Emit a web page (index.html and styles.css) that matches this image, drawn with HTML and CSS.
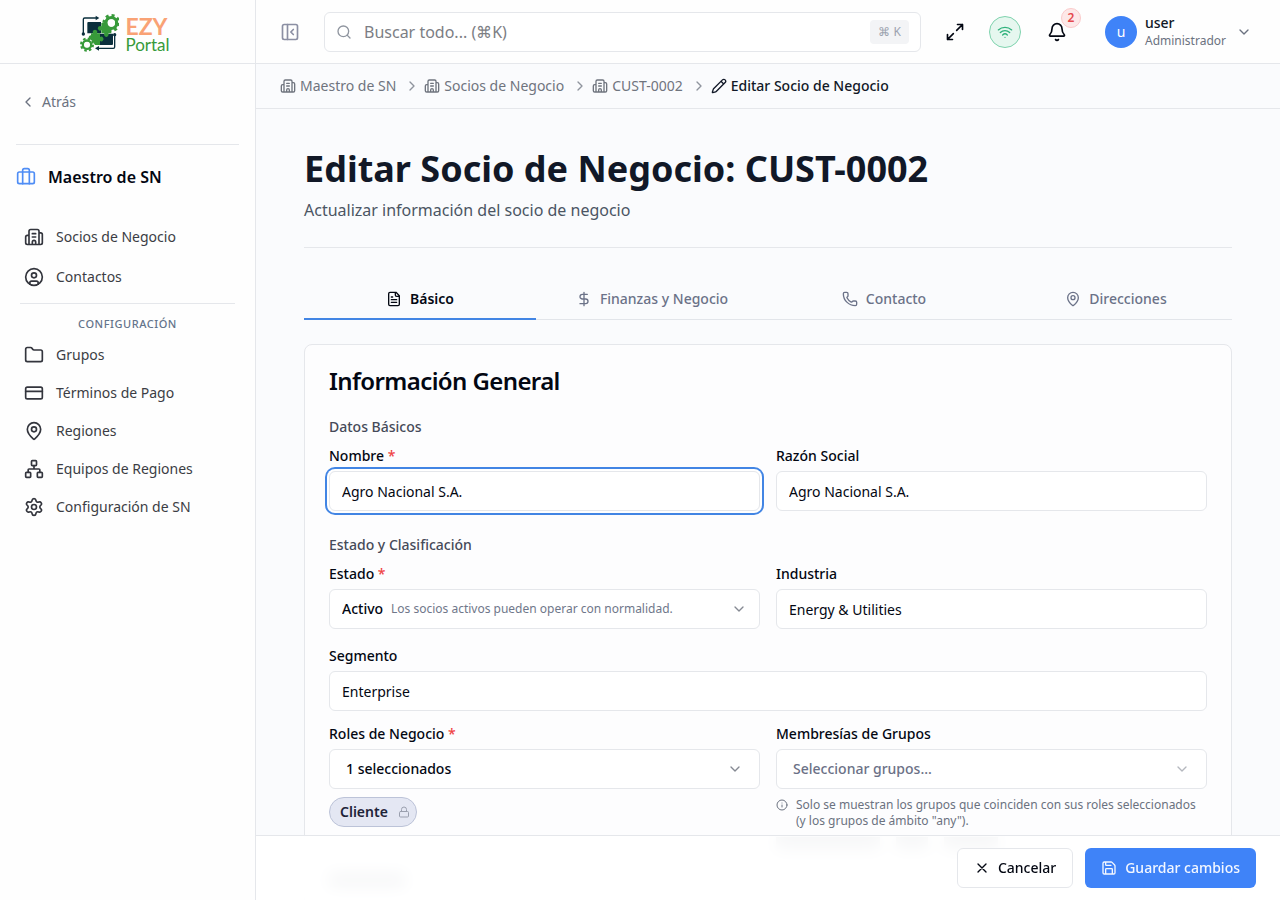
FILE: index.html
```html
<!DOCTYPE html>
<html lang="es">
<head>
<meta charset="utf-8">
<meta name="viewport" content="width=device-width, initial-scale=1">
<title>Editar Socio de Negocio - EZY Portal</title>
<link rel="stylesheet" href="styles.css">
</head>
<body>
<svg class="sprite" aria-hidden="true">
  <symbol id="building" viewBox="0 0 24 24"><path d="M10 12h4M10 8h4M14 21v-3a2 2 0 0 0-4 0v3M6 10H4a2 2 0 0 0-2 2v7a2 2 0 0 0 2 2h16a2 2 0 0 0 2-2V9a2 2 0 0 0-2-2h-2M6 21V5a2 2 0 0 1 2-2h8a2 2 0 0 1 2 2v16"/></symbol>
  <symbol id="user" viewBox="0 0 24 24"><circle cx="12" cy="12" r="10"/><circle cx="12" cy="10" r="3"/><path d="M7 20.662V19a2 2 0 0 1 2-2h6a2 2 0 0 1 2 2v1.662"/></symbol>
  <symbol id="briefcase" viewBox="0 0 24 24"><path d="M16 20V4a2 2 0 0 0-2-2h-4a2 2 0 0 0-2 2v16"/><rect width="20" height="14" x="2" y="6" rx="2"/></symbol>
  <symbol id="folder" viewBox="0 0 24 24"><path d="M20 20a2 2 0 0 0 2-2V8a2 2 0 0 0-2-2h-7.9a2 2 0 0 1-1.69-.9L9.6 3.9A2 2 0 0 0 7.93 3H4a2 2 0 0 0-2 2v13a2 2 0 0 0 2 2Z"/></symbol>
  <symbol id="card" viewBox="0 0 24 24"><rect width="20" height="14" x="2" y="5" rx="2"/><path d="M2 10h20"/></symbol>
  <symbol id="pin" viewBox="0 0 24 24"><path d="M20 10c0 4.993-5.539 10.193-7.399 11.799a1 1 0 0 1-1.202 0C9.539 20.193 4 14.993 4 10a8 8 0 0 1 16 0"/><circle cx="12" cy="10" r="3"/></symbol>
  <symbol id="network" viewBox="0 0 24 24"><rect x="16" y="16" width="6" height="6" rx="1"/><rect x="2" y="16" width="6" height="6" rx="1"/><rect x="9" y="2" width="6" height="6" rx="1"/><path d="M5 16v-3a1 1 0 0 1 1-1h12a1 1 0 0 1 1 1v3M12 12V8"/></symbol>
  <symbol id="settings" viewBox="0 0 24 24"><path d="M9.671 4.136a2.34 2.34 0 0 1 4.659 0 2.34 2.34 0 0 0 3.319 1.915 2.34 2.34 0 0 1 2.33 4.033 2.34 2.34 0 0 0 0 3.831 2.34 2.34 0 0 1-2.33 4.033 2.34 2.34 0 0 0-3.319 1.915 2.34 2.34 0 0 1-4.659 0 2.34 2.34 0 0 0-3.32-1.915 2.34 2.34 0 0 1-2.33-4.033 2.34 2.34 0 0 0 0-3.831A2.34 2.34 0 0 1 6.35 6.051a2.34 2.34 0 0 0 3.319-1.915"/><circle cx="12" cy="12" r="3"/></symbol>
  <symbol id="panel" viewBox="0 0 24 24"><rect width="18" height="18" x="3" y="3" rx="2"/><path d="M9 3v18M16 15l-3-3 3-3"/></symbol>
  <symbol id="search" viewBox="0 0 24 24"><path d="m21 21-4.34-4.34"/><circle cx="11" cy="11" r="8"/></symbol>
  <symbol id="expand" viewBox="0 0 24 24"><path d="M15 3h6v6M21 3l-7 7M3 21l7-7M9 21H3v-6"/></symbol>
  <symbol id="wifi" viewBox="0 0 24 24"><path d="M12 20h.01M2 8.82a15 15 0 0 1 20 0M5 12.859a10 10 0 0 1 14 0M8.5 16.429a5 5 0 0 1 7 0"/></symbol>
  <symbol id="bell" viewBox="0 0 24 24"><path d="M10.268 21a2 2 0 0 0 3.464 0M3.262 15.326A1 1 0 0 0 4 17h16a1 1 0 0 0 .74-1.673C19.41 13.956 18 12.499 18 8A6 6 0 0 0 6 8c0 4.499-1.411 5.956-2.738 7.326"/></symbol>
  <symbol id="pencil" viewBox="0 0 24 24"><path d="M21.174 6.812a1 1 0 0 0-3.986-3.987L3.842 16.174a2 2 0 0 0-.5.83l-1.321 4.352a.5.5 0 0 0 .623.622l4.353-1.32a2 2 0 0 0 .83-.497zM15 5l4 4"/></symbol>
  <symbol id="file" viewBox="0 0 24 24"><path d="M15 2H6a2 2 0 0 0-2 2v16a2 2 0 0 0 2 2h12a2 2 0 0 0 2-2V7ZM14 2v4a2 2 0 0 0 2 2h4M10 9H8M16 13H8M16 17H8"/></symbol>
  <symbol id="dollar" viewBox="0 0 24 24"><path d="M12 2v20M17 5H9.5a3.5 3.5 0 0 0 0 7h5a3.5 3.5 0 0 1 0 7H6"/></symbol>
  <symbol id="phone" viewBox="0 0 24 24"><path d="M13.832 16.568a1 1 0 0 0 1.213-.303l.355-.465A2 2 0 0 1 17 15h3a2 2 0 0 1 2 2v3a2 2 0 0 1-2 2A18 18 0 0 1 2 4a2 2 0 0 1 2-2h3a2 2 0 0 1 2 2v3a2 2 0 0 1-.8 1.6l-.468.351a1 1 0 0 0-.292 1.233 14 14 0 0 0 6.392 6.384"/></symbol>
  <symbol id="lock" viewBox="0 0 24 24"><rect width="18" height="11" x="3" y="11" rx="2"/><path d="M7 11V7a5 5 0 0 1 10 0v4"/></symbol>
  <symbol id="info" viewBox="0 0 24 24"><circle cx="12" cy="12" r="10"/><path d="M12 16v-4M12 8h.01"/></symbol>
  <symbol id="close" viewBox="0 0 24 24"><path d="M18 6 6 18M6 6l12 12"/></symbol>
  <symbol id="save" viewBox="0 0 24 24"><path d="M15.2 3a2 2 0 0 1 1.4.6l3.8 3.8a2 2 0 0 1 .6 1.4V19a2 2 0 0 1-2 2H5a2 2 0 0 1-2-2V5a2 2 0 0 1 2-2zM17 21v-7a1 1 0 0 0-1-1H8a1 1 0 0 0-1 1v7M7 3v4a1 1 0 0 0 1 1h7"/></symbol>
  <symbol id="down" viewBox="0 0 24 24"><path d="m6 9 6 6 6-6"/></symbol>
  <symbol id="left" viewBox="0 0 24 24"><path d="m15 18-6-6 6-6"/></symbol>
  <symbol id="right" viewBox="0 0 24 24"><path d="m9 18 6-6-6-6"/></symbol>
</svg>

<div class="app">
  <aside class="sidebar">
    <a class="brand" href="#">
      <svg class="brand-mark" viewBox="30 33 120 120" aria-hidden="true">
        <g fill="none" stroke="#0b2f3d" stroke-width="4">
          <path d="M43 96V55q0-4 4-4h34"/>
          <path d="M137 104v34q0 4-4 4H88"/>
        </g>
        <g fill="#0b2f3d">
          <path d="M80 44l11 7-11 7z"/><path d="M90 135l-12 7 12 7z"/>
          <circle cx="43" cy="99" r="5"/><circle cx="137" cy="101" r="5"/>
          <path d="M58 63h38v34H55V66q0-3 3-3z"/>
          <path d="M92 98h40v31q0 3-3 3H92z"/>
        </g>
        <circle cx="127" cy="66" r="16" fill="none" stroke="#379a3a" stroke-width="10"/>
        <circle cx="127" cy="66" r="23" fill="none" stroke="#379a3a" stroke-width="8" stroke-dasharray="9 9.06"/>
        <circle cx="54" cy="131" r="12" fill="none" stroke="#379a3a" stroke-width="8"/>
        <circle cx="54" cy="131" r="18" fill="none" stroke="#379a3a" stroke-width="6" stroke-dasharray="7.5 6.64"/>
        <g fill="#379a3a">
          <path d="M97 66h18l12 18v13h-9a7 7 0 1 1-12 0h-9v-9a7 7 0 1 1 0-12z"/>
          <path d="M66 97h6a7 7 0 1 1 12 0h9v11a7 7 0 1 1 0 12v12H78l-8-12-11-8a7 7 0 0 1 7-9z"/>
        </g>
        <circle cx="127" cy="66" r="11" fill="#fefefe"/>
        <circle cx="54" cy="131" r="9" fill="#fefefe"/>
      </svg>
      <span class="brand-name"><span class="brand-ezy">EZY</span><span class="brand-portal">Portal</span></span>
    </a>
    <div class="back-row"><a class="back" href="#"><svg class="icon sm"><use href="#left"/></svg>Atrás</a></div>
    <div class="module"><svg class="icon"><use href="#briefcase"/></svg>Maestro de SN</div>
    <nav class="nav" aria-label="Maestro de SN">
      <a class="nav-item tall" href="#"><svg class="icon"><use href="#building"/></svg>Socios de Negocio</a>
      <a class="nav-item tall" href="#"><svg class="icon"><use href="#user"/></svg>Contactos</a>
      <div class="nav-heading">Configuración</div>
      <a class="nav-item" href="#"><svg class="icon"><use href="#folder"/></svg>Grupos</a>
      <a class="nav-item" href="#"><svg class="icon"><use href="#card"/></svg>Términos de Pago</a>
      <a class="nav-item" href="#"><svg class="icon"><use href="#pin"/></svg>Regiones</a>
      <a class="nav-item" href="#"><svg class="icon"><use href="#network"/></svg>Equipos de Regiones</a>
      <a class="nav-item" href="#"><svg class="icon"><use href="#settings"/></svg>Configuración de SN</a>
    </nav>
  </aside>

  <div class="workspace">
    <header class="topbar">
      <button class="plain toggle" type="button" aria-label="Contraer menú"><svg class="icon"><use href="#panel"/></svg></button>
      <div class="search">
        <svg class="icon sm"><use href="#search"/></svg>
        <input class="search-input" type="search" aria-label="Buscar todo" placeholder="Buscar todo... (⌘K)">
        <kbd class="kbd">⌘ K</kbd>
      </div>
      <button class="plain" type="button" aria-label="Pantalla completa"><svg class="icon"><use href="#expand"/></svg></button>
      <button class="plain status" type="button" aria-label="Conectado"><svg class="icon sm"><use href="#wifi"/></svg></button>
      <button class="plain bell" type="button" aria-label="Notificaciones"><svg class="icon"><use href="#bell"/></svg><span class="badge">2</span></button>
      <button class="plain account" type="button">
        <span class="avatar">u</span>
        <span class="account-text"><span class="account-name">user</span><span class="account-role">Administrador</span></span>
        <svg class="icon sm"><use href="#down"/></svg>
      </button>
    </header>

    <nav class="crumbs" aria-label="Ruta">
      <a class="crumb" href="#"><svg class="icon sm"><use href="#building"/></svg>Maestro de SN</a>
      <svg class="icon sm crumb-sep"><use href="#right"/></svg>
      <a class="crumb" href="#"><svg class="icon sm"><use href="#building"/></svg>Socios de Negocio</a>
      <svg class="icon sm crumb-sep"><use href="#right"/></svg>
      <a class="crumb" href="#"><svg class="icon sm"><use href="#building"/></svg>CUST-0002</a>
      <svg class="icon sm crumb-sep"><use href="#right"/></svg>
      <span class="crumb current" aria-current="page"><svg class="icon sm"><use href="#pencil"/></svg>Editar Socio de Negocio</span>
    </nav>

    <form class="scroller">
      <main class="page">
        <div class="page-head">
          <h1 class="page-title">Editar Socio de Negocio: CUST-0002</h1>
          <p class="page-sub">Actualizar información del socio de negocio</p>
        </div>

        <div class="tabs" role="tablist">
          <button class="tab active" type="button" role="tab" aria-selected="true"><svg class="icon sm"><use href="#file"/></svg>Básico</button>
          <button class="tab" type="button" role="tab" aria-selected="false"><svg class="icon sm"><use href="#dollar"/></svg>Finanzas y Negocio</button>
          <button class="tab" type="button" role="tab" aria-selected="false"><svg class="icon sm"><use href="#phone"/></svg>Contacto</button>
          <button class="tab" type="button" role="tab" aria-selected="false"><svg class="icon sm"><use href="#pin"/></svg>Direcciones</button>
        </div>

        <section class="panel">
          <h2 class="panel-title">Información General</h2>

          <div class="group">
            <h3 class="group-title">Datos Básicos</h3>
            <div class="row">
              <div class="field">
                <label class="label" for="nombre">Nombre <span class="req">*</span></label>
                <input class="control focused" id="nombre" type="text" value="Agro Nacional S.A.">
              </div>
              <div class="field">
                <label class="label" for="razon">Razón Social</label>
                <input class="control" id="razon" type="text" value="Agro Nacional S.A.">
              </div>
            </div>
          </div>

          <div class="group">
            <h3 class="group-title">Estado y Clasificación</h3>
            <div class="row">
              <div class="field">
                <label class="label" for="estado">Estado <span class="req">*</span></label>
                <div class="picker">
                  <select class="control strong" id="estado" aria-describedby="estado-nota"><option>Activo</option></select>
                  <span class="picker-note" id="estado-nota">Los socios activos pueden operar con normalidad.</span>
                  <svg class="icon sm"><use href="#down"/></svg>
                </div>
              </div>
              <div class="field">
                <label class="label" for="industria">Industria</label>
                <input class="control" id="industria" type="text" value="Energy &amp; Utilities">
              </div>
            </div>
            <div class="stack">
              <div class="field">
                <label class="label" for="segmento">Segmento</label>
                <input class="control" id="segmento" type="text" value="Enterprise">
              </div>
              <div class="row">
                <div class="field">
                  <label class="label" for="roles">Roles de Negocio <span class="req">*</span></label>
                  <div class="picker wide">
                    <select class="control strong" id="roles"><option>1 seleccionados</option></select>
                    <svg class="icon sm"><use href="#down"/></svg>
                  </div>
                  <span class="chip">Cliente<svg class="icon xs"><use href="#lock"/></svg></span>
                </div>
                <div class="field">
                  <label class="label" for="grupos">Membresías de Grupos</label>
                  <div class="picker wide faded">
                    <select class="control strong" id="grupos"><option>Seleccionar grupos...</option></select>
                    <svg class="icon sm"><use href="#down"/></svg>
                  </div>
                  <p class="hint"><svg class="icon xs"><use href="#info"/></svg><span>Solo se muestran los grupos que coinciden con sus roles seleccionados (y los grupos de ámbito "any").</span></p>
                  <div class="ghosts" aria-hidden="true"><span class="ghost g-long"></span><span class="ghost g-short"></span><span class="ghost g-mid"></span></div>
                </div>
              </div>
            </div>
          </div>
          <div class="ghost g-title" aria-hidden="true"></div>
        </section>
      </main>

      <footer class="actions">
        <button class="btn" type="button"><svg class="icon sm"><use href="#close"/></svg>Cancelar</button>
        <button class="btn primary" type="submit"><svg class="icon sm"><use href="#save"/></svg>Guardar cambios</button>
      </footer>
    </form>
  </div>
</div>
</body>
</html>
```

FILE: styles.css
```css
*, *::before, *::after { box-sizing: border-box; }

body {
  margin: 0;
  font-family: "Noto Sans", "Open Sans", sans-serif;
  font-size: 14px;
  line-height: 20px;
  color: #030712;
  background: #fafbfd;
}

h1, h2, h3, p { margin: 0; }
a { color: inherit; text-decoration: none; }
button, input, select { font: inherit; color: inherit; }
button { cursor: pointer; }

.sprite { display: none; }

.icon {
  width: 20px;
  height: 20px;
  flex: none;
  fill: none;
  stroke: currentColor;
  stroke-width: 2;
  stroke-linecap: round;
  stroke-linejoin: round;
}
.icon.sm { width: 16px; height: 16px; }
.icon.xs { width: 12px; height: 12px; }

.app {
  display: grid;
  grid-template-columns: 256px minmax(0, 1fr);
  height: 100vh;
}

/* Sidebar */
.sidebar {
  display: flex;
  flex-direction: column;
  background: #fefefe;
  border-right: 1px solid #e5e7eb;
}
.brand {
  display: flex;
  align-items: center;
  justify-content: center;
  gap: 6px;
  height: 64px;
  padding-right: 6px;
  border-bottom: 1px solid #e5e7eb;
}
.brand-mark { width: 40px; height: 40px; }
.brand-name {
  display: flex;
  flex-direction: column;
  padding-top: 6px;
  font-family: Lato, sans-serif;
}
.brand-ezy { font-size: 23px; line-height: 20px; font-weight: 700; color: #f9a275; }
.brand-portal { font-size: 17px; line-height: 18px; color: #379a3a; }

.back-row {
  margin: 0 16px;
  padding: 28px 4px 32px;
  border-bottom: 1px solid #e5e7eb;
}
.back { display: flex; align-items: center; gap: 6px; color: #6b7280; }
.module {
  display: flex;
  align-items: center;
  gap: 12px;
  padding: 20px 16px 28px;
  font-size: 16px;
  line-height: 24px;
  font-weight: 600;
}
.module .icon { color: #4f8df5; }
.nav { display: flex; flex-direction: column; }
.nav-item {
  display: flex;
  align-items: center;
  gap: 12px;
  height: 38px;
  padding: 0 24px;
  color: #3b3d44;
}
.nav-item.tall { height: 40px; }
.nav-item .icon { color: #33353d; }
.nav-heading {
  margin: 6px 20px 0;
  padding: 11px 0 4px;
  border-top: 1px solid #e5e7eb;
  text-align: center;
  text-transform: uppercase;
  font-size: 11px;
  line-height: 17px;
  font-weight: 500;
  letter-spacing: 0.05em;
  color: #64748b;
}

/* Top bar */
.workspace { display: flex; flex-direction: column; min-width: 0; min-height: 0; }
.topbar {
  display: flex;
  align-items: center;
  gap: 24px;
  flex: none;
  height: 64px;
  padding: 0 28px 0 24px;
  background: #fefefe;
  border-bottom: 1px solid #e5e7eb;
}
.plain {
  display: inline-flex;
  align-items: center;
  justify-content: center;
  padding: 0;
  border: 0;
  background: none;
}
.toggle { color: #8b8fa3; }
.search {
  display: flex;
  flex: 1;
  align-items: center;
  gap: 12px;
  height: 40px;
  min-width: 0;
  padding: 0 11px;
  border: 1px solid #e5e7eb;
  border-radius: 6px;
  background: #fff;
  color: #8f959f;
}
.search-input {
  flex: 1;
  min-width: 0;
  padding: 0;
  border: 0;
  outline: 0;
  background: none;
  font-size: 16px;
  line-height: 24px;
}
.search-input::placeholder { color: #7c7e84; opacity: 1; }
.kbd {
  padding: 2px 8px;
  border-radius: 4px;
  background: #f3f4f6;
  font-family: inherit;
  font-size: 12px;
  line-height: 20px;
  color: #9ca3af;
}
.status {
  width: 32px;
  height: 32px;
  border: 1px solid #7fd3ae;
  border-radius: 50%;
  background: #e6f7ef;
  color: #2fb27c;
}
.bell { position: relative; width: 24px; height: 24px; }
.badge {
  position: absolute;
  left: 16px;
  top: -12px;
  width: 20px;
  height: 20px;
  border: 1px solid #fbcaca;
  border-radius: 50%;
  background: #fde8e8;
  font-size: 12px;
  line-height: 18px;
  font-weight: 600;
  color: #e5484d;
}
.account { gap: 8px; padding-left: 12px; color: #6b7280; }
.avatar {
  width: 32px;
  height: 32px;
  border-radius: 50%;
  background: #3f83f8;
  line-height: 32px;
  color: #fff;
}
.account-text { display: flex; flex-direction: column; padding-right: 2px; text-align: left; }
.account-name { line-height: 18px; font-weight: 500; color: #111827; }
.account-role { font-size: 12px; line-height: 18px; }

/* Breadcrumb */
.crumbs {
  display: flex;
  align-items: center;
  flex: none;
  height: 45px;
  padding: 0 24px;
  border-bottom: 1px solid #e5e7eb;
  white-space: nowrap;
}
.crumb { display: inline-flex; align-items: center; gap: 4px; color: #6f747e; }
.crumb.current { font-weight: 500; color: #111827; }
.crumb-sep { margin: 0 4px 0 8px; color: #8f949d; }

/* Page */
.scroller { flex: 1; min-height: 0; overflow: auto; scrollbar-width: none; }
.page { padding: 40px 48px 16px; }
.page-head { padding-bottom: 24px; border-bottom: 1px solid #e5e7eb; }
.page-title { font-size: 36px; line-height: 40px; font-weight: 700; color: #111827; }
.page-sub { margin-top: 8px; font-size: 16px; line-height: 26px; color: #4b5563; }

.tabs {
  display: grid;
  grid-template-columns: repeat(4, 1fr);
  height: 40px;
  margin: 32px 0 24px;
  box-shadow: inset 0 -1px #e2e5ea;
}
.tab {
  display: flex;
  align-items: center;
  justify-content: center;
  gap: 8px;
  padding: 0;
  border: 0;
  border-bottom: 2px solid transparent;
  background: none;
  font-weight: 500;
  color: #6b7288;
}
.tab.active { border-color: #4285e4; font-weight: 600; color: #030712; }

.panel {
  display: flex;
  flex-direction: column;
  gap: 24px;
  min-height: 640px;
  padding: 24px;
  border: 1px solid #e5e7eb;
  border-radius: 8px;
  background: #fdfdfe;
}
.panel-title { font-size: 24px; line-height: 24px; font-weight: 600; letter-spacing: -0.025em; }
.group-title { margin-bottom: 12px; font-size: 14px; line-height: 20px; font-weight: 500; color: #454a59; }
.row { display: grid; grid-template-columns: 1fr 1fr; gap: 16px; align-items: start; }
.stack { display: flex; flex-direction: column; gap: 16px; margin-top: 20px; }
.field { display: flex; flex-direction: column; gap: 8px; min-width: 0; }
.label { line-height: 14px; font-weight: 500; }
.req { color: #ef4444; }

.control {
  width: 100%;
  height: 40px;
  padding: 0 12px;
  border: 1px solid #e5e7eb;
  border-radius: 6px;
  background: #fff;
  outline: 0;
}
.control.focused { box-shadow: 0 0 0 2px #fff, 0 0 0 4px #4285e4; }
.control.strong { appearance: none; font-weight: 500; }
.picker { display: grid; align-items: center; }
.picker > * { grid-area: 1 / 1; }
.picker > .icon { justify-self: end; margin-right: 13px; color: #858992; pointer-events: none; }
.picker.wide > .icon { margin-right: 17px; }
.picker.wide > .control { padding: 0 16px; }
.picker.faded > .control { color: #6b7186; }
.picker.faded > .icon { color: #b4b7be; }
.picker-note { padding: 0 36px 0 62px; font-size: 12px; line-height: 16px; color: #6f778a; pointer-events: none; }

.chip {
  display: inline-flex;
  align-items: center;
  align-self: flex-start;
  gap: 10px;
  height: 30px;
  padding: 0 6px 0 10px;
  border: 1px solid #bcc3d8;
  border-radius: 15px;
  background: #e4e7f3;
  font-weight: 600;
  color: #1e2338;
}
.chip .icon { color: #9a9fae; }
.hint { display: flex; gap: 8px; font-size: 12px; line-height: 16px; color: #6b7280; }
.hint .icon { margin-top: 2px; }

.ghosts { display: flex; gap: 16px; }
.ghost { display: block; height: 12px; background: #8b929e; }
.g-long { width: 104px; }
.g-short { width: 32px; }
.g-mid { width: 54px; }
.g-title { width: 76px; height: 14px; }

/* Action bar */
.actions {
  position: sticky;
  bottom: 0;
  display: flex;
  justify-content: flex-end;
  gap: 12px;
  padding: 12px 24px;
  border-top: 1px solid #e5e7eb;
  background: rgba(255, 255, 255, 0.92);
  backdrop-filter: blur(8px);
}
.btn {
  display: inline-flex;
  align-items: center;
  gap: 8px;
  height: 40px;
  padding: 0 16px;
  border: 1px solid #e5e7eb;
  border-radius: 6px;
  background: #fff;
  font-weight: 500;
}
.btn.primary { border: 0; background: #3f83f8; color: #f3f7ff; }
```
